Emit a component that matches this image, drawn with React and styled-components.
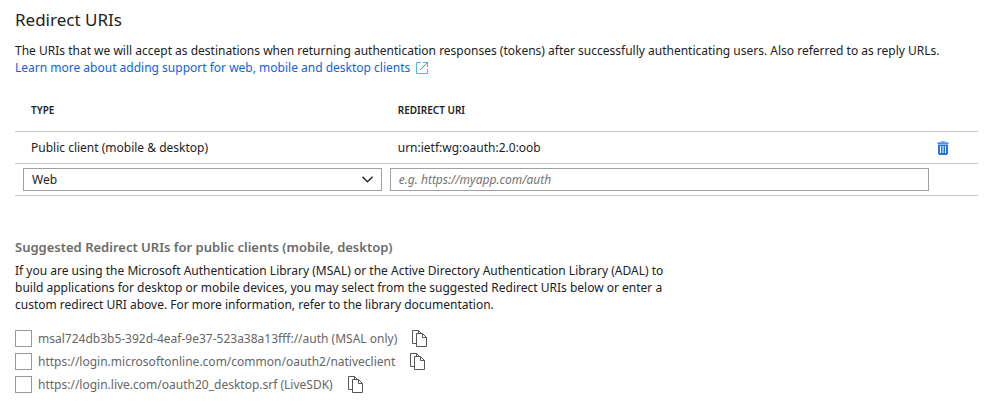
import React, { useState } from 'react';
import styled, { createGlobalStyle } from 'styled-components';

const GlobalStyle = createGlobalStyle`
  *, *::before, *::after { box-sizing: border-box; }
  body {
    margin: 0;
    background: #fff;
    color: #222;
    font: 12px/17px "Noto Sans", "Open Sans", sans-serif;
  }
  button, input, select { font: inherit; color: inherit; }
`;

const Page = styled.main`
  padding: 8px 14px 8px 15px;
`;

const Title = styled.h1`
  margin: 0 0 10px;
  font-size: 17px;
  font-weight: 400;
  line-height: 24px;
`;

const Text = styled.p`
  margin: 0;
  max-width: ${(p) => p.$maxWidth || 'none'};
`;

const DocsLink = styled.a`
  display: inline-flex;
  align-items: center;
  gap: 6px;
  color: #0f63dc;
  text-decoration: none;
  vertical-align: top;
  &:hover { text-decoration: underline; }
`;

const UriTable = styled.table`
  width: 100%;
  margin-top: 13px;
  border-collapse: separate;
  border-spacing: 0;
  table-layout: fixed;
`;

const Column = styled.col`
  width: ${(p) => p.$width || 'auto'};
`;

const HeaderCell = styled.th`
  height: 43px;
  padding: 0 ${(p) => (p.$first ? 16 : 12)}px;
  border-bottom: 1px solid #c8c8c8;
  font-size: 10px;
  font-weight: 600;
  text-align: left;
  text-transform: uppercase;
`;

const Cell = styled.td`
  height: 32px;
  padding: 0 ${(p) => (p.$first ? 16 : 12)}px;
  border-bottom: 1px solid #c8c8c8;
`;

const FieldCell = styled(Cell)`
  padding: 0 4px 0 ${(p) => (p.$first ? 8 : 4)}px;
`;

const ActionCell = styled(Cell)`
  padding: 0 4px;
`;

const SelectBox = styled.div`
  display: grid;
  align-items: center;
  > * { grid-area: 1 / 1; }
  > svg { justify-self: end; margin-right: 9px; pointer-events: none; }
`;

const Select = styled.select`
  appearance: none;
  width: 100%;
  height: 23px;
  padding: 0 28px 0 8px;
  border: 1px solid #a0a0a0;
  border-radius: 0;
  background: #fff;
`;

const UriInput = styled.input`
  display: block;
  width: 100%;
  height: 23px;
  padding: 0 8px;
  border: 1px solid #a0a0a0;
  border-radius: 0;
  &::placeholder { color: #747474; font-style: italic; opacity: 1; }
`;

const IconButton = styled.button`
  display: flex;
  padding: 0;
  border: 0;
  background: none;
  color: ${(p) => p.$color || '#555'};
  cursor: pointer;
`;

const Subtitle = styled.h2`
  margin: 43px 0 6px;
  color: #6b6b6b;
  font-size: 13px;
  font-weight: 600;
  line-height: 17px;
`;

const Suggestions = styled.ul`
  margin: 14px 0 0;
  padding: 0;
  list-style: none;
`;

const Suggestion = styled.li`
  display: flex;
  align-items: center;
  gap: 15px;
  height: 23px;
`;

const CheckLabel = styled.label`
  display: flex;
  align-items: center;
  gap: 6px;
  color: #666;
`;

const Checkbox = styled.input`
  appearance: none;
  width: 17px;
  height: 17px;
  margin: 0;
  border: 1px solid #999;
  background: #fff;
  &:checked { background: #015cda; box-shadow: inset 0 0 0 3px #fff; }
`;

const ExternalIcon = () => (
  <svg width="12" height="12" viewBox="0 0 12 12" fill="none" stroke="#59b4d9" aria-hidden="true">
    <path d="M5 .5H.5v11h11V7M7 .5h4.5V5" />
    <path d="M11.5.5 4 8" stroke="#3999c6" />
  </svg>
);

const ChevronIcon = () => (
  <svg width="11" height="7" viewBox="0 0 11 7" fill="none" stroke="#222" strokeWidth="1.4" aria-hidden="true">
    <path d="m.5.7 5 5 5-5" />
  </svg>
);

const TrashIcon = () => (
  <svg width="12" height="14" viewBox="0 0 12 14" fill="currentColor" aria-hidden="true">
    <path d="M4 0h4v1H4z" opacity=".5" />
    <path d="M.5 1.5h11v1.2H.5z" />
    <path
      fillRule="evenodd"
      opacity=".85"
      d="M1 3.5h10v9l-1 1.5H2l-1-1.5zM3 5v7h1V5zm2.5 0v7h1V5zm2.5 0v7h1V5z"
    />
  </svg>
);

const CopyIcon = () => (
  <svg width="16" height="17" viewBox="0 0 16 17" fill="none" stroke="currentColor" aria-hidden="true">
    <path d="M4.5 13.5h-4V.5h6l3 3M6.5.5v3" />
    <path d="M4.5 3.5h6l4 4v9h-10z" fill="#fff" />
    <path d="M10.5 3.5v4h4" />
  </svg>
);

const suggestions = [
  'msal724db3b5-392d-4eaf-9e37-523a38a13fff://auth (MSAL only)',
  'https://login.microsoftonline.com/common/oauth2/nativeclient',
  'https://login.live.com/oauth20_desktop.srf (LiveSDK)',
];

export default function App() {
  const [type, setType] = useState('web');
  const [uri, setUri] = useState('');
  return (
    <>
      <GlobalStyle />
      <Page>
        <Title>Redirect URIs</Title>
        <Text>
          The URIs that we will accept as destinations when returning authentication responses (tokens) after
          successfully authenticating users. Also referred to as reply URLs.
        </Text>
        <Text>
          <DocsLink href="#docs">
            Learn more about adding support for web, mobile and desktop clients
            <ExternalIcon />
          </DocsLink>
        </Text>
        <UriTable>
          <colgroup>
            <Column $width="38.5%" />
            <Column />
            <Column $width="45px" />
          </colgroup>
          <thead>
            <tr>
              <HeaderCell $first scope="col">Type</HeaderCell>
              <HeaderCell scope="col" colSpan={2}>Redirect URI</HeaderCell>
            </tr>
          </thead>
          <tbody>
            <tr>
              <Cell $first>Public client (mobile &amp; desktop)</Cell>
              <Cell>urn:ietf:wg:oauth:2.0:oob</Cell>
              <ActionCell>
                <IconButton type="button" $color="#015cda" aria-label="Delete redirect URI">
                  <TrashIcon />
                </IconButton>
              </ActionCell>
            </tr>
            <tr>
              <FieldCell $first>
                <SelectBox>
                  <Select aria-label="Type" value={type} onChange={(e) => setType(e.target.value)}>
                    <option value="web">Web</option>
                    <option value="public">Public client (mobile &amp; desktop)</option>
                  </Select>
                  <ChevronIcon />
                </SelectBox>
              </FieldCell>
              <FieldCell>
                <UriInput
                  aria-label="Redirect URI"
                  placeholder="e.g. https://myapp.com/auth"
                  value={uri}
                  onChange={(e) => setUri(e.target.value)}
                />
              </FieldCell>
              <ActionCell />
            </tr>
          </tbody>
        </UriTable>
        <Subtitle>Suggested Redirect URIs for public clients (mobile, desktop)</Subtitle>
        <Text $maxWidth="670px">
          If you are using the Microsoft Authentication Library (MSAL) or the Active Directory Authentication Library
          (ADAL) to build applications for desktop or mobile devices, you may select from the suggested Redirect URIs
          below or enter a custom redirect URI above. For more information, refer to the library documentation.
        </Text>
        <Suggestions>
          {suggestions.map((item) => (
            <Suggestion key={item}>
              <CheckLabel>
                <Checkbox type="checkbox" />
                {item}
              </CheckLabel>
              <IconButton type="button" aria-label={`Copy ${item}`}>
                <CopyIcon />
              </IconButton>
            </Suggestion>
          ))}
        </Suggestions>
      </Page>
    </>
  );
}
